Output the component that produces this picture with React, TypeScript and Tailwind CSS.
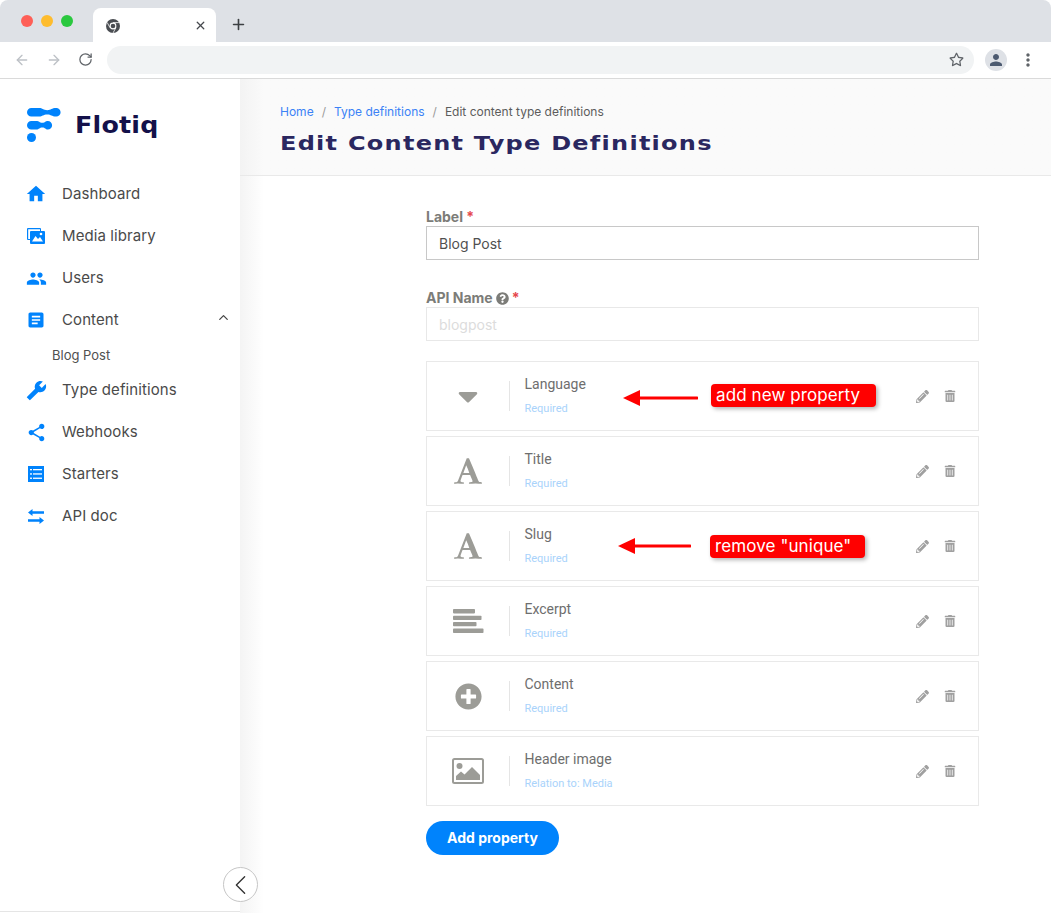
import { FaCaretDown, FaPencilAlt, FaPlusCircle, FaQuestionCircle, FaRegStar, FaTrashAlt } from "react-icons/fa";
import { MdArticle, MdBuild, MdHome, MdMoreVert, MdPeople, MdPerson, MdShare } from "react-icons/md";
import { ArrowLeft, ArrowRight, ChevronLeft, ChevronUp, Plus, RotateCw, X } from "lucide-react";
import type { ReactNode } from "react";

const nav = [
  { label: "Dashboard", icon: <MdHome className="shrink-0 text-[22px]" /> },
  { label: "Media library", icon: <MediaIcon /> },
  { label: "Users", icon: <MdPeople className="shrink-0 text-[21px]" /> },
];

const navBottom = [
  { label: "Type definitions", icon: <MdBuild className="shrink-0 text-[21px] -scale-x-100" /> },
  { label: "Webhooks", icon: <MdShare className="shrink-0 text-[21px]" /> },
  { label: "Starters", icon: <StartersIcon /> },
  { label: "API doc", icon: <ApiIcon /> },
];

const properties = [
  { name: "Language", note: "Required", icon: <FaCaretDown className="text-[32px]" /> },
  { name: "Title", note: "Required", icon: <FontIcon /> },
  { name: "Slug", note: "Required", icon: <FontIcon /> },
  { name: "Excerpt", note: "Required", icon: <LinesIcon /> },
  { name: "Content", note: "Required", icon: <FaPlusCircle className="text-[27px]" /> },
  { name: "Header image", note: "Relation to: Media", icon: <PictureIcon /> },
];

function MediaIcon() {
  return (
    <svg width="18" height="16" viewBox="0 0 18 16" fill="#0083fc" className="shrink-0">
      <path d="M0 1a1 1 0 0 1 1-1h12a1 1 0 0 1 1 1v2h-1V1.200H1.200V11H3v1H1a1 1 0 0 1-1-1Z" />
      <rect x="3" y="3" width="15" height="13" rx="1" />
      <path d="M5 13.500 8.500 8l2.500 3 2-2 3 4.500Z" fill="#fff" />
      <circle cx="14" cy="6" r="1.300" fill="#fff" />
    </svg>
  );
}

function StartersIcon() {
  return (
    <svg width="16" height="16" viewBox="0 0 16 16" className="shrink-0">
      <rect width="16" height="16" fill="#0083fc" />
      <g fill="#fff">
        <rect x="2" y="3" width="2" height="1.300" />
        <rect x="5" y="3" width="9" height="1.300" />
        <rect x="2" y="7.300" width="2" height="1.300" />
        <rect x="5" y="7.300" width="9" height="1.300" />
        <rect x="2" y="11.600" width="2" height="1.300" />
        <rect x="5" y="11.600" width="9" height="1.300" />
      </g>
    </svg>
  );
}

function ApiIcon() {
  return (
    <svg width="16" height="15" viewBox="0 0 16 15" fill="#0083fc" className="shrink-0">
      <path d="M0 3.500 4.500 0v2.300H16v2.400H4.500V7Z" />
      <path d="M16 11.500 11.500 8v2.300H0v2.400h11.500V15Z" />
    </svg>
  );
}

function FontIcon() {
  return (
    <svg width="30" height="30" viewBox="0 0 1792 1792" fill="currentColor">
      <path d="M789 559l-170 450q33 0 136.500 2t160.500 2q19 0 57-2-87-253-184-452zm-725 1105l2-79q23-7 56-12.500t57-10.500 49.500-14.500 44.500-29 31-50.500l237-616 280-724h128q8 14 11 21l205 480q33 78 106 257.500t114 274.500q15 34 58 144.500t72 168.500q20 45 35 57 19 15 88 29.500t84 20.500q6 38 6 57 0 5-.5 13.500t-.5 12.500q-63 0-190-8t-191-8q-76 0-215 7t-178 8q0-43 4-78l131-28q1 0 12.500-2.500t15.500-3.500 14.500-4.500 15-6.500 11-8 9-11 2.500-14q0-16-31-96.500t-72-177.500-42-100l-450-2q-26 58-76.500 195.500t-50.500 162.500q0 22 14 37.500t43.500 24.500 48.500 13.500 57 8.500 41 4q1 19 1 58 0 9-2 27-58 0-174.500-10t-174.500-10q-8 0-26.500 4t-21.500 4q-80 14-188 14z" />
    </svg>
  );
}

function LinesIcon() {
  return (
    <svg width="31" height="24" viewBox="0 0 31 24" fill="currentColor">
      <rect x="0" y="0" width="22" height="4.400" rx="0.800" />
      <rect x="0" y="6.700" width="28.500" height="4.400" rx="0.800" />
      <rect x="0" y="12.900" width="23.500" height="4.400" rx="0.800" />
      <rect x="0" y="19.600" width="30.500" height="4.400" rx="0.800" />
    </svg>
  );
}

function PictureIcon() {
  return (
    <svg width="32" height="26" viewBox="0 0 32 26">
      <rect x="1" y="1" width="30" height="24" rx="1.500" fill="none" stroke="currentColor" strokeWidth="2" />
      <circle cx="7.500" cy="8" r="3" fill="currentColor" />
      <path d="M4 22v-4l5-4.500 3.500 3 7.500-7.500 8 8v5Z" fill="currentColor" />
    </svg>
  );
}

function Logo() {
  return (
    <svg width="34" height="35" viewBox="0 0 34 35" fill="#0083fc">
      <path d="M4.300 0h8c3 0 4 2.200 8 2.200s4-2.200 9-2.200a4.300 4.300 0 0 1 0 8.600c-5 0-5-2-9-2s-5 2-8 2h-8a4.300 4.300 0 0 1 0-8.600Z" />
      <path d="M4.300 13h5c3 0 3 1.700 6 1.700s3-1.700 5.500-1.700a4.300 4.300 0 0 1 0 8.600c-2.500 0-2.500-2-5.500-2s-3 2-6 2h-5a4.300 4.300 0 0 1 0-8.600Z" />
      <circle cx="4.500" cy="29.500" r="4.500" />
    </svg>
  );
}

function ChromeIcon() {
  return (
    <svg width="14" height="14" viewBox="0 0 14 14">
      <circle cx="7" cy="7" r="7" fill="#4a4d52" />
      <circle cx="7" cy="7" r="3.400" fill="#fff" />
      <circle cx="7" cy="7" r="2.300" fill="#4a4d52" />
      <path d="M7 3.600h6M4 8.700 1.200 3.500M9.900 8.700 7 14" stroke="#fff" strokeWidth="0.800" />
    </svg>
  );
}

function NavRow({ icon, children }: { icon: ReactNode; children: ReactNode }) {
  return (
    <div className="flex h-[42px] items-center pl-[27px]">
      <span className="flex w-[35px] items-center text-[#0083fc]">
        <span className="flex w-[18px] items-center justify-center">{icon}</span>
      </span>
      <span className="text-[15px] tracking-[0.1px] text-[#4a4a4a]">{children}</span>
    </div>
  );
}

function Arrow({ width }: { width: number }) {
  return (
    <svg width={width} height="16" viewBox={`0 0 ${width} 16`} className="block">
      <path d={`M0 8 17 0v6.500h${width - 18}a1.500 1.500 0 0 1 0 3H17V16Z`} fill="#f00" />
    </svg>
  );
}

function Note({ children, className }: { children: ReactNode; className: string }) {
  return (
    <div className={`absolute flex h-[23px] items-center rounded-[4px] bg-[#f00] pl-[5px] font-['Inter',sans-serif] text-[17px] tracking-[0.1px] text-white shadow-[2px_2px_4px_rgba(0,0,0,0.3)] ${className}`}>
      {children}
    </div>
  );
}

export default function App() {
  return (
    <div className="flex h-[913px] w-[1051px] flex-col overflow-hidden bg-white font-['Inter',sans-serif]">
      <div className="flex h-[42px] shrink-0 rounded-t-[8px] bg-[#dee1e6]">
        <div className="flex w-[93px] items-start gap-2 pl-[21px] pt-[15px]">
          <span className="h-3 w-3 rounded-full bg-[#fe5f57]" />
          <span className="h-3 w-3 rounded-full bg-[#febc2e]" />
          <span className="h-3 w-3 rounded-full bg-[#2ac83f]" />
        </div>
        <div className="mt-2 flex h-[34px] w-[123px] items-center justify-between rounded-t-[8px] bg-white pl-[13px] pr-[9px] pt-[1px]">
          <ChromeIcon />
          <X size={13} strokeWidth={2.4} className="text-[#45484d]" />
        </div>
        <div className="flex items-center pl-[14px] pt-[7px]">
          <Plus size={17} strokeWidth={2.3} className="text-[#3c4043]" />
        </div>
      </div>

      <div className="flex h-[37px] shrink-0 items-center border-b border-[#dadada] bg-white pb-[1px] pl-[14px] pr-[12px]">
        <ArrowLeft size={16} className="shrink-0 text-[#bdc1c6]" />
        <ArrowRight size={16} className="ml-4 shrink-0 text-[#bdc1c6]" />
        <RotateCw size={15} strokeWidth={2} className="ml-[16px] shrink-0 text-[#5f6368]" />
        <div className="ml-[14px] flex h-7 w-[867px] shrink-0 items-center justify-end rounded-full bg-[#f1f3f4] pr-[10px]">
          <FaRegStar className="text-[15px] text-[#5f6368]" />
        </div>
        <div className="ml-[11px] flex h-[22px] w-[22px] shrink-0 items-center justify-center rounded-full bg-[#dee1e6]">
          <MdPerson className="text-[18px] text-[#4c5a70]" />
        </div>
        <MdMoreVert className="ml-[11px] shrink-0 text-[20px] text-[#5f6368]" />
      </div>

      <div className="flex min-h-0 flex-1">
        <aside className="relative flex h-[833px] w-[240px] shrink-0 flex-col border-b border-[#e5e5e5] bg-white">
          <div className="flex items-center gap-[14px] pl-[27px] pt-[29px]">
            <Logo />
            <span className="origin-left scale-x-[1.1] font-['DejaVu_Sans',sans-serif] text-[23px] font-bold leading-none tracking-[0.2px] text-[#14114a]">Flotiq</span>
          </div>
          <nav className="mt-[30px]">
            {nav.map((item) => (
              <NavRow key={item.label} icon={item.icon}>{item.label}</NavRow>
            ))}
            <div className="relative">
              <NavRow icon={<MdArticle className="shrink-0 text-[20px]" />}>Content</NavRow>
              <ChevronUp size={15} className="absolute right-[9px] top-[11px] text-[#444]" />
            </div>
            <div className="flex h-[28px] items-center pl-[52px] pt-[2px] text-[13px] text-[#505050]">Blog Post</div>
            {navBottom.map((item) => (
              <NavRow key={item.label} icon={item.icon}>{item.label}</NavRow>
            ))}
          </nav>
          <button className="absolute left-[223px] top-[788px] z-10 flex h-[35px] w-[35px] items-center justify-center rounded-full border border-[#c6c6c6] bg-white">
            <ChevronLeft size={34} strokeWidth={1} className="text-[#333]" />
          </button>
        </aside>

        <main className="min-w-0 flex-1 bg-gradient-to-r from-[#f4f4f4] to-white to-[24px]">
          <header className="h-[97px] border-b border-[#e9e9e9] bg-gradient-to-r from-[#f3f3f3] to-[#fafafa] to-[24px] pl-10 pt-[25px]">
            <div className="flex items-center gap-2 text-[12px] leading-[15px] text-[#5c5c5c]">
              <span className="text-[#3b82f6]">Home</span>
              <span className="text-[#999]">/</span>
              <span className="text-[#3b82f6]">Type definitions</span>
              <span className="text-[#999]">/</span>
              <span>Edit content type definitions</span>
            </div>
            <h1 className="mt-[11px] origin-left scale-x-[1.2] font-['DejaVu_Sans',sans-serif] text-[20px] font-bold leading-[26px] tracking-[1.05px] text-[#2a2760]">
              Edit Content Type Definitions
            </h1>
          </header>

          <section className="ml-[186px] w-[553px] pt-[32px]">
            <label className="block text-[14px] font-bold leading-[18px] text-[#7c7c78]">
              Label <span className="text-[#e5484d]">*</span>
            </label>
            <div className="flex h-[34px] items-center border border-[#c8c8c8] pl-3 text-[14px] text-[#505050]">Blog Post</div>

            <label className="mt-[29px] flex items-center gap-[3px] text-[14px] font-bold leading-[18px] text-[#7c7c78]">
              API Name <FaQuestionCircle className="text-[13px]" /> <span className="text-[#e5484d]">*</span>
            </label>
            <div className="flex h-[34px] items-center border border-[#e8e8e8] pl-3 text-[14px] text-[#dcdcdc]">blogpost</div>

            <div className="mt-[20px] flex flex-col gap-[5px] font-['Roboto',sans-serif]">
              {properties.map((p) => (
                <div key={p.name} className="relative flex h-[70px] items-center border border-[#e9e9e9] bg-white">
                  <div className="flex w-[82px] justify-center text-[#9c9c97]">{p.icon}</div>
                  <div className="h-[30px] w-px bg-[#e5e5e5]" />
                  <div className="ml-[14.5px] flex-1 pb-[1px]">
                    <div className="text-[14px] leading-[18px] text-[#6e6e6e]">{p.name}</div>
                    <div className="mt-[9px] text-[11px] leading-[14px] text-[#a9d3fb]">{p.note}</div>
                  </div>
                  <div className="flex items-center gap-[15px] pr-[22px] text-[#a0a0a0]">
                    <FaPencilAlt className="text-[13px]" />
                    <FaTrashAlt className="text-[12px]" />
                  </div>
                  {p.name === "Language" && (
                    <>
                      <div className="absolute left-[196px] top-[28px]"><Arrow width={75} /></div>
                      <Note className="left-[284px] top-[22px] w-[165px]">add new property</Note>
                    </>
                  )}
                  {p.name === "Slug" && (
                    <>
                      <div className="absolute left-[191px] top-[26px]"><Arrow width={73} /></div>
                      <Note className="left-[283px] top-[23px] w-[155px]">remove "unique"</Note>
                    </>
                  )}
                </div>
              ))}
            </div>

            <button className="mt-[15px] h-[34px] w-[133px] rounded-full bg-[#0083fc] pb-[1px] text-[14px] font-bold text-white">Add property</button>
          </section>
        </main>
      </div>
    </div>
  );
}
